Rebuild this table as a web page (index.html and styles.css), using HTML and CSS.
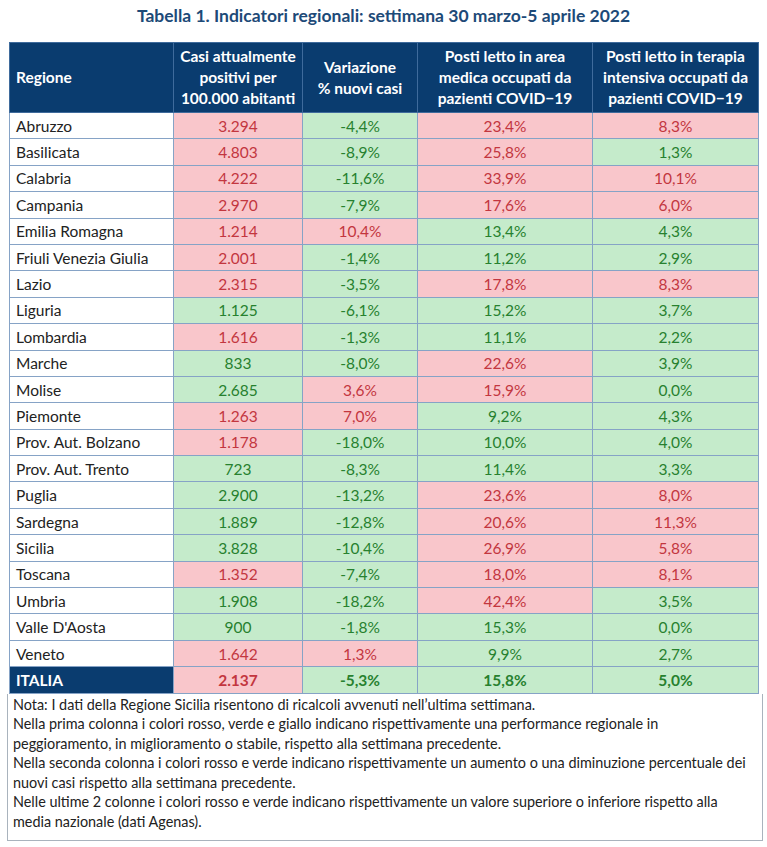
FILE: index.html
```html
<!DOCTYPE html>
<html lang="it">
<head>
    <meta charset="UTF-8">
    <meta name="viewport" content="width=device-width, initial-scale=1.0">
    <title>Tabella 1. Indicatori regionali</title>
    <link rel="stylesheet" href="styles.css">
</head>
<body>
    <h1 class="title">Tabella 1. Indicatori regionali: settimana 30 marzo-5 aprile 2022</h1>

    <table class="indicators">
        <colgroup>
            <col class="c-region">
            <col class="c-cases">
            <col class="c-var">
            <col class="c-medic">
            <col class="c-icu">
        </colgroup>
        <thead>
            <tr>
                <th class="region">Regione</th>
                <th>Casi attualmente<br>positivi per<br>100.000 abitanti</th>
                <th>Variazione<br>% nuovi casi</th>
                <th>Posti letto in area<br>medica occupati da<br>pazienti COVID&minus;19</th>
                <th>Posti letto in terapia<br>intensiva occupati da<br>pazienti COVID&minus;19</th>
            </tr>
        </thead>
        <tbody id="rows"></tbody>
    </table>

    <div class="notes">
        Nota: I dati della Regione Sicilia risentono di ricalcoli avvenuti nell’ultima settimana.<br>
        Nella prima colonna i colori rosso, verde e giallo indicano rispettivamente una performance regionale in<br>
        peggioramento, in miglioramento o stabile, rispetto alla settimana precedente.<br>
        Nella seconda colonna i colori rosso e verde indicano rispettivamente un aumento o una diminuzione percentuale dei<br>
        nuovi casi rispetto alla settimana precedente.<br>
        Nelle ultime 2 colonne i colori rosso e verde indicano rispettivamente un valore superiore o inferiore rispetto alla<br>
        media nazionale (dati Agenas).
    </div>

    <script>
        // r = worse (red), g = better (green)
        const data = [
            ["Abruzzo", "3.294", "r", "-4,4%", "g", "23,4%", "r", "8,3%", "r"],
            ["Basilicata", "4.803", "r", "-8,9%", "g", "25,8%", "r", "1,3%", "g"],
            ["Calabria", "4.222", "r", "-11,6%", "g", "33,9%", "r", "10,1%", "r"],
            ["Campania", "2.970", "r", "-7,9%", "g", "17,6%", "r", "6,0%", "r"],
            ["Emilia Romagna", "1.214", "r", "10,4%", "r", "13,4%", "g", "4,3%", "g"],
            ["Friuli Venezia Giulia", "2.001", "r", "-1,4%", "g", "11,2%", "g", "2,9%", "g"],
            ["Lazio", "2.315", "r", "-3,5%", "g", "17,8%", "r", "8,3%", "r"],
            ["Liguria", "1.125", "g", "-6,1%", "g", "15,2%", "g", "3,7%", "g"],
            ["Lombardia", "1.616", "r", "-1,3%", "g", "11,1%", "g", "2,2%", "g"],
            ["Marche", "833", "g", "-8,0%", "g", "22,6%", "r", "3,9%", "g"],
            ["Molise", "2.685", "g", "3,6%", "r", "15,9%", "r", "0,0%", "g"],
            ["Piemonte", "1.263", "r", "7,0%", "r", "9,2%", "g", "4,3%", "g"],
            ["Prov. Aut. Bolzano", "1.178", "r", "-18,0%", "g", "10,0%", "g", "4,0%", "g"],
            ["Prov. Aut. Trento", "723", "g", "-8,3%", "g", "11,4%", "g", "3,3%", "g"],
            ["Puglia", "2.900", "g", "-13,2%", "g", "23,6%", "r", "8,0%", "r"],
            ["Sardegna", "1.889", "g", "-12,8%", "g", "20,6%", "r", "11,3%", "r"],
            ["Sicilia", "3.828", "g", "-10,4%", "g", "26,9%", "r", "5,8%", "r"],
            ["Toscana", "1.352", "r", "-7,4%", "g", "18,0%", "r", "8,1%", "r"],
            ["Umbria", "1.908", "g", "-18,2%", "g", "42,4%", "r", "3,5%", "g"],
            ["Valle D'Aosta", "900", "g", "-1,8%", "g", "15,3%", "g", "0,0%", "g"],
            ["Veneto", "1.642", "r", "1,3%", "r", "9,9%", "g", "2,7%", "g"],
            ["ITALIA", "2.137", "r", "-5,3%", "g", "15,8%", "g", "5,0%", "g"]
        ];

        const tbody = document.getElementById("rows");
        data.forEach(row => {
            const tr = document.createElement("tr");
            if (row[0] === "ITALIA") tr.className = "total";
            let html = '<td class="region">' + row[0] + '</td>';
            for (let i = 1; i < row.length; i += 2) {
                html += '<td class="' + (row[i + 1] === "r" ? "bad" : "good") + '">' + row[i] + '</td>';
            }
            tr.innerHTML = html;
            tbody.appendChild(tr);
        });
    </script>
</body>
</html>
```

FILE: styles.css
```css
body {
    font-family: Lato, "Open Sans", sans-serif;
    margin: 0;
    padding: 0 0 0 9px;
    background-color: #fff;
    color: #222;
}
.title {
    margin: 0;
    padding: 5px 0 15px;
    text-align: center;
    color: #1d4a78;
    font-size: 17.5px;
    font-weight: bold;
    line-height: 22px;
    width: 749px;
}
.indicators {
    border-collapse: collapse;
    table-layout: fixed;
    width: 749px;
    font-size: 15.5px;
}
.c-region { width: 164px; }
.c-cases { width: 129px; }
.c-var { width: 115px; }
.c-medic { width: 175px; }
.c-icu { width: 166px; }
.indicators th {
    background-color: #0a3c6f;
    color: #fff;
    font-weight: bold;
    font-size: 15.5px;
    line-height: 21px;
    height: 70px;
    padding: 0 1px;
    border: 1px solid #3f6b9c;
    text-align: center;
    box-sizing: border-box;
    white-space: nowrap;
}
.indicators th.region {
    text-align: left;
    padding-left: 6px;
}
.indicators td {
    height: 26.4px;
    padding: 0 6px;
    border: 1px solid #86a3c6;
    text-align: center;
    box-sizing: border-box;
    line-height: 18px;
    white-space: nowrap;
}
.indicators td.region {
    text-align: left;
    background-color: #fff;
    color: #222;
}
.bad {
    background-color: #f9c6cb;
    color: #c3363f;
}
.good {
    background-color: #c5ebcb;
    color: #27812f;
}
.total td {
    font-weight: bold;
}
.total td.region {
    background-color: #0a3c6f;
    color: #fff;
}
.notes {
    margin-left: -2px;
    width: 744px;
    padding: 1px 5px 9px 5px;
    border: 1px solid #a9b3bd;
    border-top: none;
    font-size: 14.4px;
    line-height: 19.5px;
    white-space: nowrap;
    color: #222;
}
```
